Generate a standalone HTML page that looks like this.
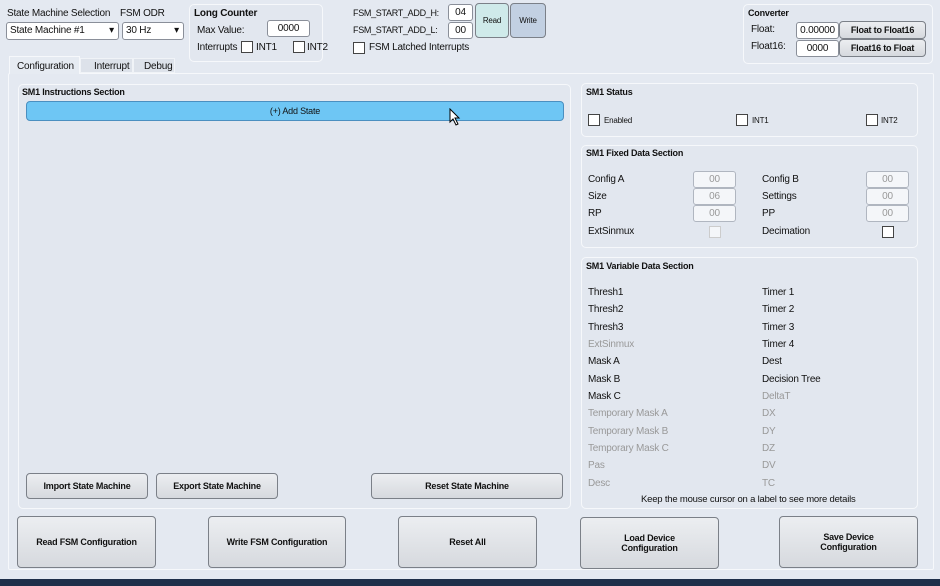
<!DOCTYPE html>
<html><head><style>
*{box-sizing:border-box;margin:0;padding:0}
body{width:940px;height:586px;background:#e4e9f1;font-family:"Liberation Sans",sans-serif;font-size:10px;color:#111;position:relative;overflow:hidden;letter-spacing:-0.2px}
.a{position:absolute;white-space:nowrap}
.box{position:absolute;border:1.5px solid #f6f8fb;border-radius:5px;background:#e2e7ef}
.b{font-weight:bold;font-size:9px}
.in{position:absolute;background:#fff;border:1px solid #8a8f99;border-radius:3px;text-align:center;font-size:10px;line-height:15px}
.ing{position:absolute;background:#f4f6f9;border:1px solid #b0b6c0;border-radius:3px;text-align:center;color:#999;line-height:15px}
.cb{position:absolute;width:12px;height:12px;background:#fff;border:1px solid #444}
.btn{position:absolute;background:linear-gradient(#eceef1,#d6d9de);border:1px solid #7b8088;border-radius:4px;font-weight:bold;font-size:9px;display:flex;align-items:center;justify-content:center;text-align:center}
.g{color:#999}
</style></head><body>
<div class="a" style="left:7px;top:8px">State Machine Selection</div>
<div class="a" style="left:120px;top:8px">FSM ODR</div>
<div class="in" style="left:6px;top:22px;width:113px;height:18px;text-align:left;padding-left:3px;line-height:16px">State Machine #1<span style="position:absolute;right:4px">▾</span></div>
<div class="in" style="left:122px;top:22px;width:62px;height:18px;text-align:left;padding-left:3px;line-height:16px">30 Hz<span style="position:absolute;right:4px">▾</span></div>
<div class="box" style="left:189px;top:4px;width:134px;height:58px"></div>
<div class="a b" style="left:194px;top:8px;font-size:10px">Long Counter</div>
<div class="a" style="left:197px;top:25px">Max Value:</div>
<div class="in" style="left:267px;top:20px;width:43px;height:17px">0000</div>
<div class="a" style="left:197px;top:42px">Interrupts</div><div class="cb" style="left:241px;top:41px"></div><div class="a" style="left:256px;top:42px">INT1</div>
<div class="cb" style="left:293px;top:41px"></div><div class="a" style="left:307px;top:42px">INT2</div>
<div class="a" style="left:353px;top:8px;font-size:9px;letter-spacing:-0.3px">FSM_START_ADD_H:</div>
<div class="a" style="left:353px;top:25px;font-size:9px;letter-spacing:-0.3px">FSM_START_ADD_L:</div>
<div class="in" style="left:448px;top:4px;width:25px;height:17px">04</div>
<div class="in" style="left:448px;top:22px;width:25px;height:17px">00</div>
<div class="btn" style="left:475px;top:3px;width:34px;height:35px;background:#cfeaea;font-weight:normal;font-size:8px">Read</div>
<div class="btn" style="left:510px;top:3px;width:36px;height:35px;background:#c2d0e2;font-weight:normal;font-size:8px">Write</div>
<div class="cb" style="left:353px;top:42px"></div><div class="a" style="left:369px;top:42px">FSM Latched Interrupts</div>
<div class="box" style="left:743px;top:4px;width:190px;height:60px"></div>
<div class="a b" style="left:748px;top:8px">Converter</div>
<div class="a" style="left:751px;top:24px">Float:</div><div class="a" style="left:751px;top:41px">Float16:</div>
<div class="in" style="left:796px;top:22px;width:43px;height:17px">0.00000</div>
<div class="in" style="left:796px;top:40px;width:43px;height:17px">0000</div>
<div class="btn" style="left:839px;top:21px;width:87px;height:18px">Float to Float16</div>
<div class="btn" style="left:839px;top:39px;width:87px;height:18px">Float16 to Float</div>
<div class="a" style="left:9px;top:56px;width:71px;height:18px;background:#e6ebf2;border:1px solid #f6f8fb;border-bottom:none;padding:4px 0 0 7px;z-index:2">Configuration</div>
<div class="a" style="left:80px;top:58px;width:53px;height:15px;background:#dde2ea;border:1px solid #f0f3f7;padding:2px 0 0 13px">Interrupt</div>
<div class="a" style="left:133px;top:58px;width:42px;height:15px;background:#dde2ea;border:1px solid #f0f3f7;padding:2px 0 0 10px">Debug</div>
<div class="box" style="left:8px;top:73px;width:926px;height:497px;border-radius:2px;background:#e4e9f1"></div>
<div class="box" style="left:18px;top:84px;width:553px;height:425px"></div>
<div class="a b" style="left:22px;top:87px">SM1 Instructions Section</div>
<div class="a" style="left:26px;top:101px;width:538px;height:20px;background:#6ec6f4;border:1px solid #4a8fc0;border-radius:4px;text-align:center;line-height:18px;font-size:9px">(+) Add State</div>
<div class="btn" style="left:26px;top:473px;width:122px;height:26px">Import State Machine</div>
<div class="btn" style="left:156px;top:473px;width:122px;height:26px">Export State Machine</div>
<div class="btn" style="left:371px;top:473px;width:192px;height:26px">Reset State Machine</div>
<div class="box" style="left:581px;top:83px;width:337px;height:54px"></div>
<div class="a b" style="left:586px;top:87px">SM1 Status</div>
<div class="cb" style="left:588px;top:114px"></div><div class="a" style="left:604px;top:116px;font-size:8px">Enabled</div>
<div class="cb" style="left:736px;top:114px"></div><div class="a" style="left:752px;top:116px;font-size:8px">INT1</div>
<div class="cb" style="left:866px;top:114px"></div><div class="a" style="left:881px;top:116px;font-size:8px">INT2</div>
<div class="box" style="left:581px;top:145px;width:337px;height:103px"></div>
<div class="a b" style="left:586px;top:148px">SM1 Fixed Data Section</div>
<div class="a" style="left:588px;top:174px">Config A</div><div class="a" style="left:588px;top:191px">Size</div><div class="a" style="left:588px;top:208px">RP</div><div class="a" style="left:588px;top:226px">ExtSinmux</div>
<div class="ing" style="left:693px;top:171px;width:43px;height:17px">00</div>
<div class="ing" style="left:693px;top:188px;width:43px;height:17px">06</div>
<div class="ing" style="left:693px;top:205px;width:43px;height:17px">00</div>
<div class="cb" style="left:709px;top:226px;border-color:#ccc;background:#f4f6f9"></div>
<div class="a" style="left:762px;top:174px">Config B</div><div class="a" style="left:762px;top:191px">Settings</div><div class="a" style="left:762px;top:208px">PP</div><div class="a" style="left:762px;top:226px">Decimation</div>
<div class="ing" style="left:866px;top:171px;width:43px;height:17px">00</div>
<div class="ing" style="left:866px;top:188px;width:43px;height:17px">00</div>
<div class="ing" style="left:866px;top:205px;width:43px;height:17px">00</div>
<div class="cb" style="left:882px;top:226px"></div>
<div class="box" style="left:581px;top:257px;width:337px;height:252px"></div>
<div class="a b" style="left:586px;top:261px">SM1 Variable Data Section</div>
<div class="a" style="left:588px;top:284px;line-height:17.35px">Thresh1<br>Thresh2<br>Thresh3<br><span class="g">ExtSinmux</span><br>Mask A<br>Mask B<br>Mask C<br><span class="g">Temporary Mask A<br>Temporary Mask B<br>Temporary Mask C<br>Pas<br>Desc</span></div>
<div class="a" style="left:762px;top:284px;line-height:17.35px">Timer 1<br>Timer 2<br>Timer 3<br>Timer 4<br>Dest<br>Decision Tree<br><span class="g">DeltaT<br>DX<br>DY<br>DZ<br>DV<br>TC</span></div>
<div class="a" style="left:641px;top:494px;font-size:9.5px">Keep the mouse cursor on a label to see more details</div>
<div class="btn" style="left:17px;top:516px;width:139px;height:52px">Read FSM Configuration</div>
<div class="btn" style="left:208px;top:516px;width:138px;height:52px">Write FSM Configuration</div>
<div class="btn" style="left:398px;top:516px;width:139px;height:52px">Reset All</div>
<div class="btn" style="left:580px;top:517px;width:139px;height:52px">Load Device<br>Configuration</div>
<div class="btn" style="left:779px;top:516px;width:139px;height:52px">Save Device<br>Configuration</div>
<div class="a" style="left:0;top:579px;width:940px;height:7px;background:#1e2f4a"></div>
<svg class="a" style="left:449px;top:108px" width="12" height="18" viewBox="0 0 12 18"><path d="M1 1L1 14L4 11L7 17L9 16L6 10L10 10Z" fill="#fff" stroke="#000" stroke-width="1"/></svg>
</body></html>
